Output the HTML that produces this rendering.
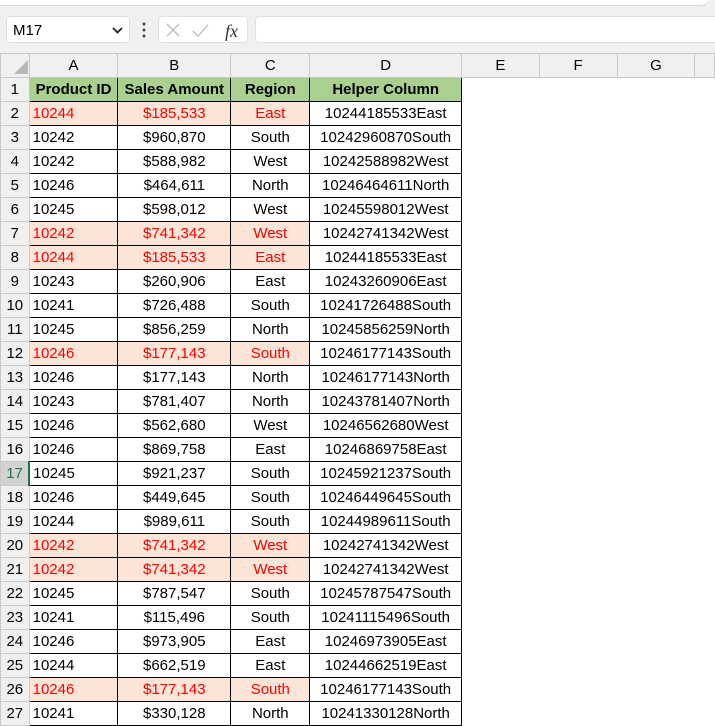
<!DOCTYPE html><html><head><style>
body{margin:0;width:715px;height:719px;overflow:hidden;background:#fff;font-family:"Liberation Sans",sans-serif;position:relative}
.top{position:absolute;left:0;top:0;width:715px;height:53px;background:#f0f0f0}
.wb{position:absolute;left:0;top:0;width:708px;height:5px;background:#fff;border-bottom:1px solid #d8d8d8;border-radius:0 0 6px 0}
.nb{position:absolute;left:6px;top:16px;width:124px;height:27px;background:#fff;border:1px solid #e0e0e0;border-radius:4px;font-size:15px;line-height:27px;box-sizing:border-box;padding-left:6px}
.fx{position:absolute;left:158px;top:16px;width:90px;height:27px;background:#fff;border:1px solid #e0e0e0;border-radius:4px;box-sizing:border-box}
.fi{position:absolute;left:255px;top:16px;width:470px;height:27px;background:#fff;border:1px solid #e0e0e0;border-radius:4px;box-sizing:border-box}
table{position:absolute;left:0;top:53px;border-collapse:collapse;table-layout:fixed;font-size:15px}
td{height:23px;padding:0 3px;white-space:nowrap;overflow:hidden;border:1px solid transparent;text-align:center}
tr.h td{background:#f0f0f0;border-color:#c8c8c8;height:23px}
td.r{background:#f0f0f0;border-color:#c8c8c8;text-align:center;padding:0}
td.b{border-color:#000}
td.l{text-align:left}
tr.g td.b{background:#a9d08e;font-weight:bold}
tr.p td.p{background:#fce4d6;color:#f00}
</style></head><body>
<div class="top"><div class="wb"></div>
<div class="nb">M17<svg style="position:absolute;right:6px;top:10px" width="11" height="7"><path d="M1 1l4.5 4.5L10 1" stroke="#222" stroke-width="1.8" fill="none"/></svg></div>
<svg style="position:absolute;left:142px;top:22px" width="4" height="16"><circle cx="2" cy="2" r="1.5" fill="#444"/><circle cx="2" cy="8" r="1.5" fill="#444"/><circle cx="2" cy="14" r="1.5" fill="#444"/></svg>
<div class="fx"><svg width="90" height="27"><path d="M8 7l12 12M20 7L8 19" stroke="#bbb" stroke-width="1.3"/><path d="M34 14l5 5 10-11" stroke="#bbb" stroke-width="1.3" fill="none"/><text x="66" y="20" font-family="Liberation Serif" font-style="italic" font-size="18" fill="#333">fx</text></svg></div>
<div class="fi"></div></div>
<table>
<colgroup><col style="width:29px"><col style="width:89px"><col style="width:113px"><col style="width:80px"><col style="width:152px"><col style="width:80px"><col style="width:80px"><col style="width:80px"><col style="width:20px"></colgroup>
<tr class="h"><td class="r"><svg width="14" height="14" style="position:relative;top:3px;left:6px"><path d="M14 0V14H0Z" fill="#b8b8b8"/></svg></td><td>A</td><td>B</td><td>C</td><td>D</td><td>E</td><td>F</td><td>G</td><td></td></tr>
<tr class="g"><td class="r">1</td><td class="b">Product ID</td><td class="b">Sales Amount</td><td class="b">Region</td><td class="b">Helper Column</td><td></td><td></td><td></td><td></td></tr>
<tr class="p"><td class="r">2</td><td class="b l p">10244</td><td class="b p">$185,533</td><td class="b p">East</td><td class="b">10244185533East</td><td></td><td></td><td></td><td></td></tr>
<tr><td class="r">3</td><td class="b l">10242</td><td class="b">$960,870</td><td class="b">South</td><td class="b">10242960870South</td><td></td><td></td><td></td><td></td></tr>
<tr><td class="r">4</td><td class="b l">10242</td><td class="b">$588,982</td><td class="b">West</td><td class="b">10242588982West</td><td></td><td></td><td></td><td></td></tr>
<tr><td class="r">5</td><td class="b l">10246</td><td class="b">$464,611</td><td class="b">North</td><td class="b">10246464611North</td><td></td><td></td><td></td><td></td></tr>
<tr><td class="r">6</td><td class="b l">10245</td><td class="b">$598,012</td><td class="b">West</td><td class="b">10245598012West</td><td></td><td></td><td></td><td></td></tr>
<tr class="p"><td class="r">7</td><td class="b l p">10242</td><td class="b p">$741,342</td><td class="b p">West</td><td class="b">10242741342West</td><td></td><td></td><td></td><td></td></tr>
<tr class="p"><td class="r">8</td><td class="b l p">10244</td><td class="b p">$185,533</td><td class="b p">East</td><td class="b">10244185533East</td><td></td><td></td><td></td><td></td></tr>
<tr><td class="r">9</td><td class="b l">10243</td><td class="b">$260,906</td><td class="b">East</td><td class="b">10243260906East</td><td></td><td></td><td></td><td></td></tr>
<tr><td class="r">10</td><td class="b l">10241</td><td class="b">$726,488</td><td class="b">South</td><td class="b">10241726488South</td><td></td><td></td><td></td><td></td></tr>
<tr><td class="r">11</td><td class="b l">10245</td><td class="b">$856,259</td><td class="b">North</td><td class="b">10245856259North</td><td></td><td></td><td></td><td></td></tr>
<tr class="p"><td class="r">12</td><td class="b l p">10246</td><td class="b p">$177,143</td><td class="b p">South</td><td class="b">10246177143South</td><td></td><td></td><td></td><td></td></tr>
<tr><td class="r">13</td><td class="b l">10246</td><td class="b">$177,143</td><td class="b">North</td><td class="b">10246177143North</td><td></td><td></td><td></td><td></td></tr>
<tr><td class="r">14</td><td class="b l">10243</td><td class="b">$781,407</td><td class="b">North</td><td class="b">10243781407North</td><td></td><td></td><td></td><td></td></tr>
<tr><td class="r">15</td><td class="b l">10246</td><td class="b">$562,680</td><td class="b">West</td><td class="b">10246562680West</td><td></td><td></td><td></td><td></td></tr>
<tr><td class="r">16</td><td class="b l">10246</td><td class="b">$869,758</td><td class="b">East</td><td class="b">10246869758East</td><td></td><td></td><td></td><td></td></tr>
<tr><td class="r" style="background:#d2d2d2;color:#217346;border-right:2px solid #217346">17</td><td class="b l">10245</td><td class="b">$921,237</td><td class="b">South</td><td class="b">10245921237South</td><td></td><td></td><td></td><td></td></tr>
<tr><td class="r">18</td><td class="b l">10246</td><td class="b">$449,645</td><td class="b">South</td><td class="b">10246449645South</td><td></td><td></td><td></td><td></td></tr>
<tr><td class="r">19</td><td class="b l">10244</td><td class="b">$989,611</td><td class="b">South</td><td class="b">10244989611South</td><td></td><td></td><td></td><td></td></tr>
<tr class="p"><td class="r">20</td><td class="b l p">10242</td><td class="b p">$741,342</td><td class="b p">West</td><td class="b">10242741342West</td><td></td><td></td><td></td><td></td></tr>
<tr class="p"><td class="r">21</td><td class="b l p">10242</td><td class="b p">$741,342</td><td class="b p">West</td><td class="b">10242741342West</td><td></td><td></td><td></td><td></td></tr>
<tr><td class="r">22</td><td class="b l">10245</td><td class="b">$787,547</td><td class="b">South</td><td class="b">10245787547South</td><td></td><td></td><td></td><td></td></tr>
<tr><td class="r">23</td><td class="b l">10241</td><td class="b">$115,496</td><td class="b">South</td><td class="b">10241115496South</td><td></td><td></td><td></td><td></td></tr>
<tr><td class="r">24</td><td class="b l">10246</td><td class="b">$973,905</td><td class="b">East</td><td class="b">10246973905East</td><td></td><td></td><td></td><td></td></tr>
<tr><td class="r">25</td><td class="b l">10244</td><td class="b">$662,519</td><td class="b">East</td><td class="b">10244662519East</td><td></td><td></td><td></td><td></td></tr>
<tr class="p"><td class="r">26</td><td class="b l p">10246</td><td class="b p">$177,143</td><td class="b p">South</td><td class="b">10246177143South</td><td></td><td></td><td></td><td></td></tr>
<tr><td class="r">27</td><td class="b l">10241</td><td class="b">$330,128</td><td class="b">North</td><td class="b">10241330128North</td><td></td><td></td><td></td><td></td></tr>
</table>
</body></html>
